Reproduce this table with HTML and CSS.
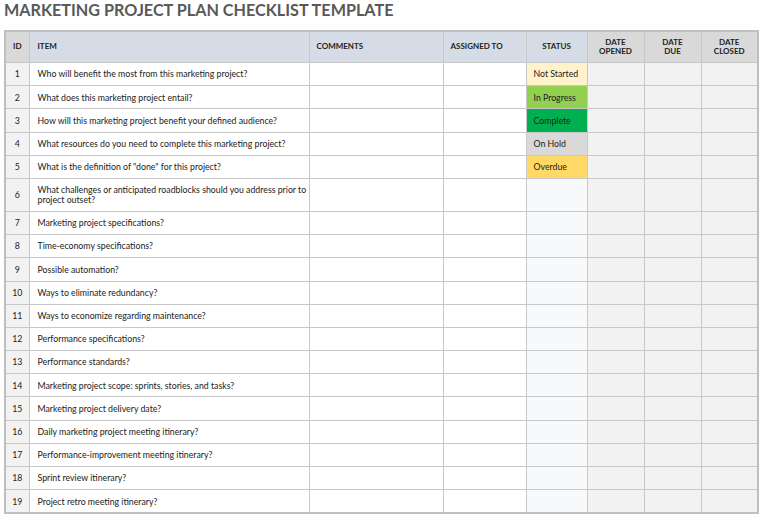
FILE: index.html
```html
<!DOCTYPE html>
<html>
<head>
<meta charset="utf-8">
<link rel="stylesheet" href="styles.css">
</head>
<body>
<h1 class="title">MARKETING PROJECT PLAN CHECKLIST TEMPLATE</h1>
<table class="plan">
<colgroup>
<col class="c-id"><col class="c-item"><col class="c-com"><col class="c-asg"><col class="c-st"><col class="c-d"><col class="c-d"><col class="c-d">
</colgroup>
<thead>
<tr>
<th class="h-id">ID</th>
<th class="h-blue left">ITEM</th>
<th class="h-blue left">COMMENTS</th>
<th class="h-blue left">ASSIGNED TO</th>
<th class="h-blue">STATUS</th>
<th class="h-grey">DATE<br>OPENED</th>
<th class="h-grey">DATE<br>DUE</th>
<th class="h-grey">DATE<br>CLOSED</th>
</tr>
</thead>
<tbody>
<tr><td class="id">1</td><td class="item">Who will benefit the most from this marketing project?</td><td></td><td></td><td class="st s-ns">Not Started</td><td class="dt"></td><td class="dt"></td><td class="dt"></td></tr>
<tr><td class="id">2</td><td class="item">What does this marketing project entail?</td><td></td><td></td><td class="st s-ip">In Progress</td><td class="dt"></td><td class="dt"></td><td class="dt"></td></tr>
<tr><td class="id">3</td><td class="item">How will this marketing project benefit your defined audience?</td><td></td><td></td><td class="st s-co">Complete</td><td class="dt"></td><td class="dt"></td><td class="dt"></td></tr>
<tr><td class="id">4</td><td class="item">What resources do you need to complete this marketing project?</td><td></td><td></td><td class="st s-oh">On Hold</td><td class="dt"></td><td class="dt"></td><td class="dt"></td></tr>
<tr><td class="id">5</td><td class="item">What is the definition of "done" for this project?</td><td></td><td></td><td class="st s-od">Overdue</td><td class="dt"></td><td class="dt"></td><td class="dt"></td></tr>
<tr class="tall"><td class="id">6</td><td class="item">What challenges or anticipated roadblocks should you address prior to project outset?</td><td></td><td></td><td class="st"></td><td class="dt"></td><td class="dt"></td><td class="dt"></td></tr>
<tr><td class="id">7</td><td class="item">Marketing project specifications?</td><td></td><td></td><td class="st"></td><td class="dt"></td><td class="dt"></td><td class="dt"></td></tr>
<tr><td class="id">8</td><td class="item">Time-economy specifications?</td><td></td><td></td><td class="st"></td><td class="dt"></td><td class="dt"></td><td class="dt"></td></tr>
<tr><td class="id">9</td><td class="item">Possible automation?</td><td></td><td></td><td class="st"></td><td class="dt"></td><td class="dt"></td><td class="dt"></td></tr>
<tr><td class="id">10</td><td class="item">Ways to eliminate redundancy?</td><td></td><td></td><td class="st"></td><td class="dt"></td><td class="dt"></td><td class="dt"></td></tr>
<tr><td class="id">11</td><td class="item">Ways to economize regarding maintenance?</td><td></td><td></td><td class="st"></td><td class="dt"></td><td class="dt"></td><td class="dt"></td></tr>
<tr><td class="id">12</td><td class="item">Performance specifications?</td><td></td><td></td><td class="st"></td><td class="dt"></td><td class="dt"></td><td class="dt"></td></tr>
<tr><td class="id">13</td><td class="item">Performance standards?</td><td></td><td></td><td class="st"></td><td class="dt"></td><td class="dt"></td><td class="dt"></td></tr>
<tr><td class="id">14</td><td class="item">Marketing project scope: sprints, stories, and tasks?</td><td></td><td></td><td class="st"></td><td class="dt"></td><td class="dt"></td><td class="dt"></td></tr>
<tr><td class="id">15</td><td class="item">Marketing project delivery date?</td><td></td><td></td><td class="st"></td><td class="dt"></td><td class="dt"></td><td class="dt"></td></tr>
<tr><td class="id">16</td><td class="item">Daily marketing project meeting itinerary?</td><td></td><td></td><td class="st"></td><td class="dt"></td><td class="dt"></td><td class="dt"></td></tr>
<tr><td class="id">17</td><td class="item">Performance-improvement meeting itinerary?</td><td></td><td></td><td class="st"></td><td class="dt"></td><td class="dt"></td><td class="dt"></td></tr>
<tr><td class="id">18</td><td class="item">Sprint review itinerary?</td><td></td><td></td><td class="st"></td><td class="dt"></td><td class="dt"></td><td class="dt"></td></tr>
<tr><td class="id">19</td><td class="item">Project retro meeting itinerary?</td><td></td><td></td><td class="st"></td><td class="dt"></td><td class="dt"></td><td class="dt"></td></tr>
</tbody>
</table>
</body>
</html>
```

FILE: styles.css
```css
html, body {
  margin: 0;
  padding: 0;
  background: #ffffff;
}
body {
  font-family: Lato, "Liberation Sans", sans-serif;
  color: #222222;
  padding: 0 3px 0 4px;
}
.title {
  margin: 0;
  height: 30px;
  font-size: 16.2px;
  line-height: 20px;
  font-weight: 700;
  color: #595959;
  letter-spacing: 0;
}
.plan {
  border-collapse: collapse;
  table-layout: fixed;
  width: 753px;
  border: 2px solid #bfbfbf;
  font-size: 8.75px;
}
.c-id { width: 24px; }
.c-item { width: 280px; }
.c-com { width: 134px; }
.c-asg { width: 83px; }
.c-st { width: 61px; }
.c-d { width: 57px; }
.plan th, .plan td {
  border: 1px solid #c8c8c8;
  padding: 0 7px;
}
.plan th {
  height: 30px;
  font-size: 8px;
  font-weight: 700;
  color: #222222;
  text-align: center;
  line-height: 9.5px;
  padding: 0 4px;
}
.plan th.left { text-align: left; padding-left: 7px; }
.plan th.h-blue.left:nth-child(2) { padding-left: 8px; }
.h-id { background: #d9d9d9; }
.h-blue { background: #d6dce5; }
.h-grey { background: #d9d9d9; }
.plan td {
  height: 22.2px;
  line-height: 9.5px;
  background: #ffffff;
}
.plan td.item { padding: 0 1px 0 8px; }
.plan tr.tall td { height: 32px; }
.plan td.id {
  background: #f2f2f2;
  text-align: center;
  padding: 0;
}
.plan td.dt { background: #f2f2f2; }
.plan td.st { background: #f8f9fb; }
.plan td.s-ns { background: #fff2cc; }
.plan td.s-ip { background: #92d050; }
.plan td.s-co { background: #00b050; }
.plan td.s-oh { background: #d9d9d9; }
.plan td.s-od { background: #ffd966; }
```
